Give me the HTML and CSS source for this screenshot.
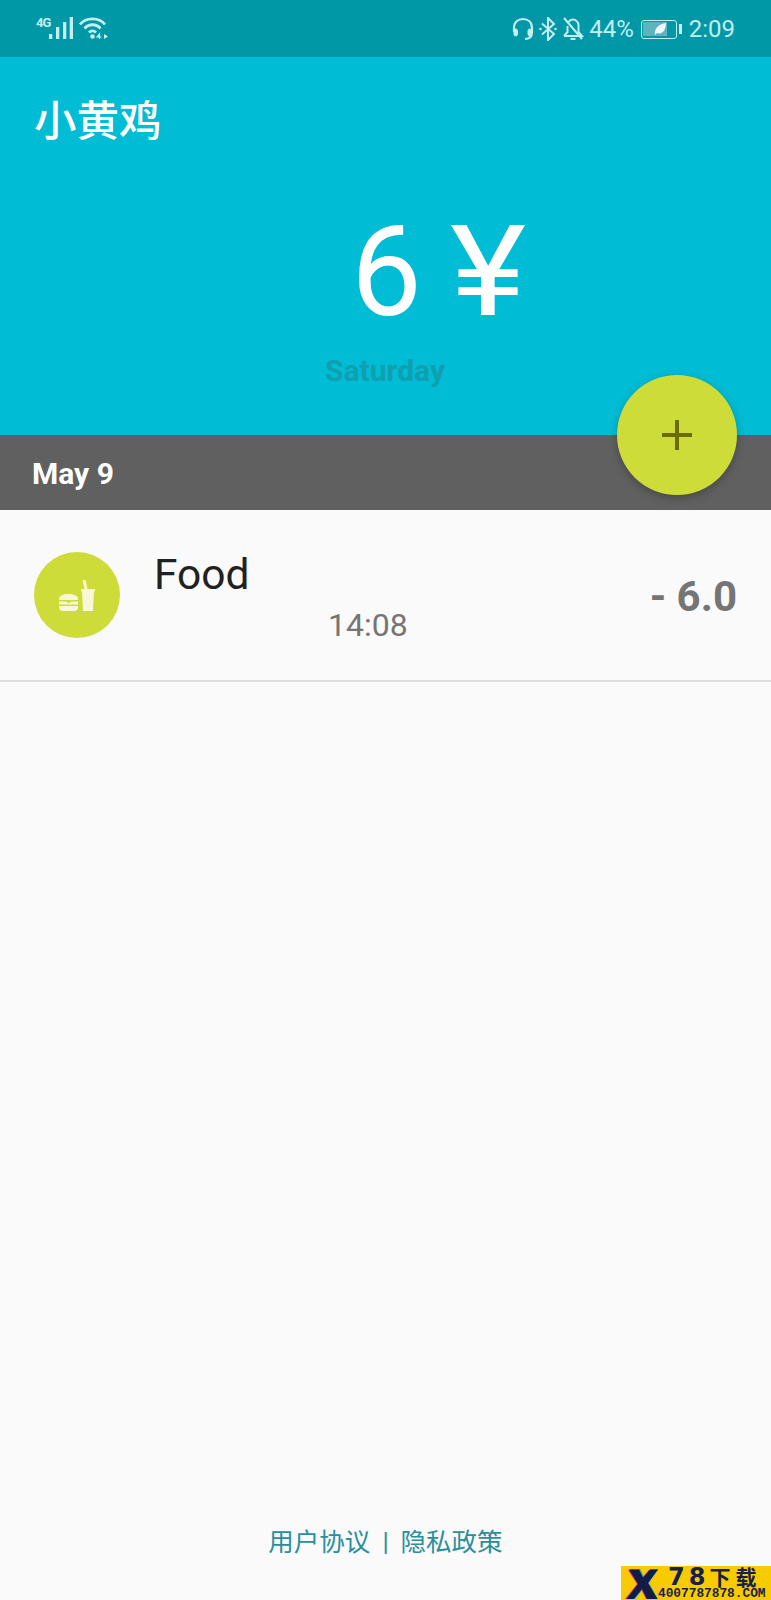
FILE: index.html
```html
<!DOCTYPE html>
<html lang="zh">
<head>
    <meta charset="UTF-8">
    <title>小黄鸡</title>
    <link rel="stylesheet" href="styles.css">
</head>
<body>
<div id="app">
    <div class="status">
        <div class="status-left">
            <span class="net">4G</span>
            <svg class="bars" width="24" height="22" viewBox="0 0 24 22">
                <rect x="0" y="17" width="3.300" height="5"/>
                <rect x="7" y="10" width="3.300" height="12"/>
                <rect x="14" y="5" width="3.300" height="17"/>
                <rect x="20.700" y="0" width="3.300" height="22"/>
            </svg>
            <svg class="wifi" width="30" height="24" viewBox="0 0 30 24" fill="none" stroke="#c4eef0" stroke-width="2.800">
                <path d="M1 8.500C7 1 20 1 26 8.500"/>
                <path d="M5.500 12.500C10 7.500 17 7.500 21.500 12.500"/>
                <path d="M10 16.500C12 14.500 15 14.500 17 16.500"/>
                <circle cx="13.500" cy="20.500" r="2.300" fill="#c4eef0" stroke="none"/>
                <path d="M20.500 23V18L18 21H22.500" stroke-width="1.200"/>
                <path d="M25 18L29 20.500L25 23Z" fill="#c4eef0" stroke="none"/>
            </svg>
        </div>
        <div class="status-right">
            <svg width="22" height="24" viewBox="0 0 22 24" fill="none" stroke="#c4eef0" stroke-width="2.200">
                <path d="M2 15V11C2 5 6 2 11 2S20 5 20 11V15C20 20 18 22 13 22"/>
                <rect x="2" y="12" width="3.500" height="7" rx="1.700" fill="#c4eef0" stroke-width="1"/>
                <rect x="16" y="12" width="3.500" height="7" rx="1.700" fill="#c4eef0" stroke-width="1"/>
            </svg>
            <svg width="18" height="24" viewBox="0 0 18 24" fill="none" stroke="#c4eef0" stroke-width="2">
                <path d="M3 6.500L15 17L9 23V1L15 7L3 17.500"/>
                <circle cx="1.500" cy="12" r="1.300" fill="#c4eef0" stroke="none"/>
                <circle cx="16.500" cy="12" r="1.300" fill="#c4eef0" stroke="none"/>
            </svg>
            <svg width="22" height="24" viewBox="0 0 22 24" fill="none" stroke="#c4eef0" stroke-width="2">
                <path d="M2 19H20L16.500 15V8C16.500 5 13.500 2.500 11 2.500C9 2.500 7.500 3.500 6.500 5M5.500 9V15L2 19"/>
                <path d="M8.500 22H13.500"/>
                <path d="M2 1L20 22"/>
            </svg>
            <span class="pct">44%</span>
            <div class="battery">
                <div class="battery-body">
                    <div class="battery-fill"></div>
                    <svg class="leaf" width="13" height="12" viewBox="0 0 13 12">
                        <path d="M1 12C0 5 5 1 12 0C12 7 8 12 3 10Z" fill="#eefafa"/>
                    </svg>
                </div>
                <div class="battery-tip"></div>
            </div>
            <span class="clock">2:09</span>
        </div>
    </div>

    <div class="header">
        <div class="title">小黄鸡</div>
        <div class="total">6 <span class="yen">¥</span></div>
        <div class="weekday">Saturday</div>
    </div>

    <div class="date-bar">May 9</div>

    <div class="fab">
        <span class="fab-h"></span>
        <span class="fab-v"></span>
    </div>

    <div class="row">
        <div class="cat">
            <svg width="36" height="31" viewBox="0 0 36 31" fill="#f8f8d8">
                <path d="M23.500 0H26.500L28.500 9H36V11.500H35L34 31H24L23 11.500H22V9H25.500Z"/>
                <path d="M0 19C0 15.500 4 14 9.500 14S19 15.500 19 19V20H0Z"/>
                <path d="M0 21.500H7L9.500 23.500L12 21.500H19V24.500H0Z"/>
                <path d="M0 26H19V27.500C19 30 17 31 15 31H4C2 31 0 30 0 27.500Z"/>
            </svg>
        </div>
        <div class="info">
            <div class="name">Food</div>
            <div class="time">14:08</div>
        </div>
        <div class="amount">- 6.0</div>
    </div>

    <div class="footer">
        <span>用户协议</span>
        <span class="sep">|</span>
        <span>隐私政策</span>
    </div>

    <div class="mark">
        <svg class="mark-logo" width="33" height="32" viewBox="0 0 33 32">
            <path d="M3 2H13L17 10L24 2H33L22 15L32 31H21L16 21L8 31H0L12 16Z" fill="#e0287a"/>
            <path d="M5 1H15L19 9L26 1H33L24 15L33 31H23L18 21L10 31H3L14 16Z" fill="#19a8c4"/>
            <path d="M4 1.500H14L18 9.500L25 1.500H33L23 15L32.500 31H22L17 21L9 31H1.500L13 16Z" fill="#141c46"/>
        </svg>
        <div class="mark-text">
            <div class="mark-top"><span class="mark-num">78</span>下载</div>
            <div class="mark-url">4007787878.COM</div>
        </div>
    </div>
</div>
</body>
</html>
```

FILE: styles.css
```css
*{
    box-sizing: border-box;
}
html,body{
    margin: 0;
    padding: 0;
}
body{
    font-family: Roboto, "Noto Sans CJK SC", sans-serif;
    background-color: #fafafa;
}
#app{
    position: relative;
    width: 771px;
    height: 1600px;
    display: flex;
    flex-direction: column;
    overflow: hidden;
}

/* status bar */
.status{
    height: 57px;
    flex: none;
    background-color: #0097a7;
    color: #c4eef0;
    display: flex;
    justify-content: space-between;
    padding: 16px 36px 0;
}
.status-left{
    display: flex;
    align-items: flex-start;
}
.net{
    font-size: 13px;
    font-weight: 700;
    line-height: 12px;
    letter-spacing: -1px;
    margin-top: 1px;
}
.bars{
    margin: 1px 0 0 -1px;
    fill: #c4eef0;
}
.wifi{
    margin: 0 0 0 6px;
}
.status-right{
    display: flex;
    align-items: center;
    height: 24px;
    margin-top: 1px;
    gap: 5px;
}
.pct,.clock{
    font-size: 24px;
    line-height: 24px;
}
.clock{
    margin-left: 2px;
}
.battery{
    display: flex;
    align-items: center;
    margin-left: 2px;
}
.battery-body{
    position: relative;
    width: 36px;
    height: 19px;
    border: 1.500px solid #c4eef0;
    border-radius: 3px;
    padding: 1.500px;
}
.battery-fill{
    width: 76%;
    height: 100%;
    background-color: #5fb3bc;
}
.leaf{
    position: absolute;
    left: 12px;
    top: 2.500px;
}
.battery-tip{
    width: 3px;
    height: 10px;
    margin-left: 2px;
    background-color: #c4eef0;
}

/* header */
.header{
    height: 378px;
    flex: none;
    background-color: #00bcd4;
    padding: 40px 34px 0;
    color: #fff;
}
.title{
    font-size: 42.500px;
    font-weight: 500;
    line-height: 50px;
}
.total{
    font-size: 126px;
    line-height: 130px;
    margin-top: 60px;
    padding-left: 317px;
    word-spacing: -3px;
    white-space: pre;
}
.yen{
    display: inline-block;
    transform: scaleX(1.15);
    transform-origin: left center;
}
.weekday{
    font-size: 30px;
    font-weight: 700;
    line-height: 34px;
    color: #0f9fb1;
    margin-left: 291px;
    padding-top: 17px;
}

.date-bar{
    height: 75px;
    flex: none;
    background-color: #606060;
    color: #fff;
    font-size: 30px;
    font-weight: 700;
    line-height: 78px;
    padding-left: 32px;
}

/* add button */
.fab{
    position: absolute;
    left: 617px;
    top: 375px;
    width: 120px;
    height: 120px;
    border-radius: 50%;
    background-color: #cddc39;
    box-shadow: 0 3px 8px rgba(0,0,0,0.25);
}
.fab-h,.fab-v{
    position: absolute;
    background-color: #6b6b00;
}
.fab-h{
    left: 45px;
    top: 58px;
    width: 30px;
    height: 4px;
}
.fab-v{
    left: 58px;
    top: 45px;
    width: 4px;
    height: 30px;
}

/* record row */
.row{
    height: 172px;
    flex: none;
    display: flex;
    align-items: flex-start;
    padding: 42px 34px 0;
    border-bottom: 2px solid #dddddd;
}
.cat{
    width: 86px;
    height: 86px;
    flex: none;
    border-radius: 50%;
    background-color: #cddc39;
    display: flex;
    align-items: center;
    justify-content: center;
}
.info{
    flex: 1;
    margin: -2px 0 0 34px;
}
.name{
    font-size: 42.500px;
    line-height: 50px;
    color: #212121;
}
.time{
    font-size: 32px;
    line-height: 38px;
    color: #757575;
    margin: 6px 0 0 174px;
}
.amount{
    font-size: 42px;
    font-weight: 700;
    line-height: 50px;
    color: #757575;
    margin-top: 20px;
}

.footer{
    margin-top: auto;
    margin-bottom: 39px;
    display: flex;
    justify-content: center;
    gap: 12px;
    font-size: 25.500px;
    line-height: 38px;
    color: #2a8f9c;
}

/* watermark */
.mark{
    position: absolute;
    left: 621px;
    top: 1566px;
    width: 150px;
    height: 34px;
    background-color: #f8cb00;
    display: flex;
}
.mark-logo{
    flex: none;
    margin: 2px 0 0 4px;
}
.mark-text{
    flex: 1;
    color: #16204a;
}
.mark-top{
    height: 21px;
    font-family: "Noto Sans CJK SC", sans-serif;
    font-size: 21px;
    font-weight: 700;
    line-height: 21px;
    letter-spacing: 5px;
    padding-left: 10px;
    white-space: nowrap;
}
.mark-num{
    font-family: "DejaVu Sans", sans-serif;
    font-size: 24px;
    letter-spacing: 4px;
}
.mark-url{
    font-family: "Liberation Mono", monospace;
    font-size: 12.800px;
    font-weight: 700;
    line-height: 13px;
    white-space: nowrap;
}
```
